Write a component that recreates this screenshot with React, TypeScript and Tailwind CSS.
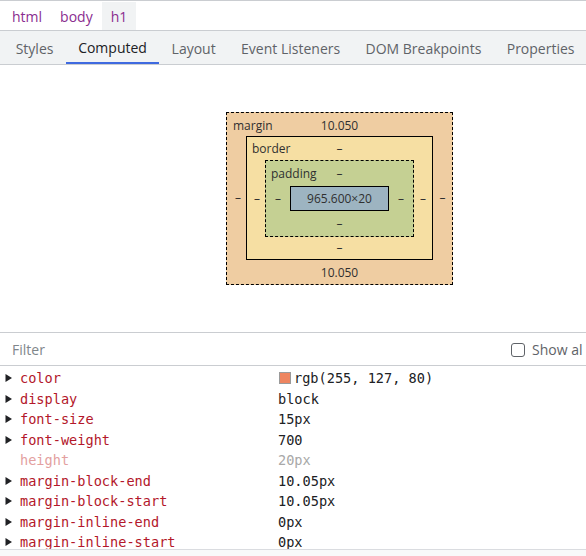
import React from "react";

const tabs = ["Styles", "Computed", "Layout", "Event Listeners", "DOM Breakpoints", "Properties"];

type Prop = { name: string; value: string; expandable?: boolean; dim?: boolean; swatch?: string };

const props: Prop[] = [
  { name: "color", value: "rgb(255, 127, 80)", expandable: true, swatch: "#ee8560" },
  { name: "display", value: "block", expandable: true },
  { name: "font-size", value: "15px", expandable: true },
  { name: "font-weight", value: "700", expandable: true },
  { name: "height", value: "20px", dim: true },
  { name: "margin-block-end", value: "10.05px", expandable: true },
  { name: "margin-block-start", value: "10.05px", expandable: true },
  { name: "margin-inline-end", value: "0px", expandable: true },
  { name: "margin-inline-start", value: "0px", expandable: true },
];

const Triangle = () => (
  <svg width="8" height="10" viewBox="0 0 8 10" className="shrink-0">
    <polygon points="0.5,1 7,5 0.5,9" fill="#202124" />
  </svg>
);

const BoxModel = () => (
  <div className="w-[227px] h-[173px] border border-dashed border-black bg-[#efcda2] grid grid-rows-[23px_124px_25px] text-[12px] text-[#303030]">
    <div className="grid grid-cols-[1fr_auto_1fr] items-center pt-[2px]">
      <span className="pl-[6px]">margin</span>
      <span>10.050</span>
      <span />
    </div>
    <div className="grid grid-cols-[19px_187px_19px] items-center">
      <span className="text-center pl-[3px]">–</span>
      {/* border */}
      <div className="h-[124px] border border-black bg-[#f6dfa3] grid grid-rows-[23px_77px_22px]">
        <div className="grid grid-cols-[1fr_auto_1fr] items-center pt-[1px]">
          <span className="pl-[5px]">border</span>
          <span>–</span>
          <span />
        </div>
        <div className="grid grid-cols-[18px_149px_18px] items-center">
          <span className="text-center pl-[2px]">–</span>
          {/* padding */}
          <div className="h-[77px] border border-dashed border-black bg-[#c5d093] grid grid-rows-[25px_25px_25px]">
            <div className="grid grid-cols-[1fr_auto_1fr] items-center pt-[1px]">
              <span className="pl-[5px]">padding</span>
              <span>–</span>
              <span />
            </div>
            <div className="grid grid-cols-[24px_99px_24px] items-center">
              <span className="text-center">–</span>
              <div className="h-[25px] border border-black bg-[#9db4c1] flex items-center justify-center">
                965.600×20
              </div>
              <span className="text-center">–</span>
            </div>
            <div className="flex items-center justify-center">–</div>
          </div>
          <span className="text-center">–</span>
        </div>
        <div className="flex items-center justify-center">–</div>
      </div>
      <span className="text-center">–</span>
    </div>
    <div className="flex items-center justify-center pt-[1px]">10.050</div>
  </div>
);

export default function App() {
  return (
    <div className="w-[586px] h-[556px] overflow-hidden bg-white flex flex-col font-['Open_Sans',sans-serif]">
      {/* breadcrumbs */}
      <div className="h-[31px] border-t border-b border-[#cacdd1] flex items-stretch pl-[3px] pt-[1px] text-[14px] text-[#8a2d8f]">
        <span className="px-[9px] flex items-center">html</span>
        <span className="px-[9px] flex items-center">body</span>
        <span className="px-[9px] flex items-center bg-[#f1f3f4]">h1</span>
      </div>

      {/* tabs */}
      <div className="h-[34px] bg-[#f1f3f4] border-b border-[#cacdd1] flex pl-[3px] text-[14px] text-[#5f6368] overflow-hidden">
        {tabs.map((t) => (
          <div
            key={t}
            className={
              t === "Computed"
                ? "px-[12px] flex items-center shrink-0 whitespace-nowrap border-b-2 border-[#3f6ae0] text-[#202124] pt-[2px]"
                : "px-[12.7px] flex items-center shrink-0 whitespace-nowrap pt-[2px]"
            }
          >
            {t}
          </div>
        ))}
      </div>

      {/* box model */}
      <div className="h-[268px] flex justify-center pt-[47px] pl-[93px] border-b border-[#cacdd1]">
        <BoxModel />
      </div>

      {/* filter */}
      <div className="h-[33px] border-b border-[#cacdd1] flex items-center justify-between pl-[12px] pt-[1px] text-[14px]">
        <span className="text-[#80868b]">Filter</span>
        <label className="flex items-center gap-[7px] text-[#5f6368] pl-[10px] w-[85px] shrink-0">
          <span className="w-[14px] h-[14px] rounded-[3px] border border-[#5f6368] bg-white shrink-0" />
          <span className="whitespace-nowrap">Show al</span>
        </label>
      </div>

      {/* computed properties */}
      <div className="h-[183px] overflow-hidden pt-[2px] font-['DejaVu_Sans_Mono',monospace] text-[13.6px]">
        {props.map((p) => (
          <div key={p.name} className="h-[20.5px] flex items-center">
            <div className="w-[278px] flex items-center pl-[5px] gap-[7px]">
              <span className="w-[8px] flex">{p.expandable && <Triangle />}</span>
              <span className={p.dim ? "text-[#e3a0a0]" : "text-[#b3172a]"}>{p.name}</span>
            </div>
            <div className="flex items-center gap-[3px]">
              {p.swatch && (
                <span className="w-[12px] h-[12px] border border-[#9a9a9a] ml-[1px]" style={{ backgroundColor: p.swatch }} />
              )}
              <span className={p.dim ? "text-[#a8a8a8]" : "text-[#202124]"}>{p.value}</span>
            </div>
          </div>
        ))}
      </div>
      <div className="flex-1 border-t border-[#dadce0] bg-[#f8f9fa]" />
    </div>
  );
}
